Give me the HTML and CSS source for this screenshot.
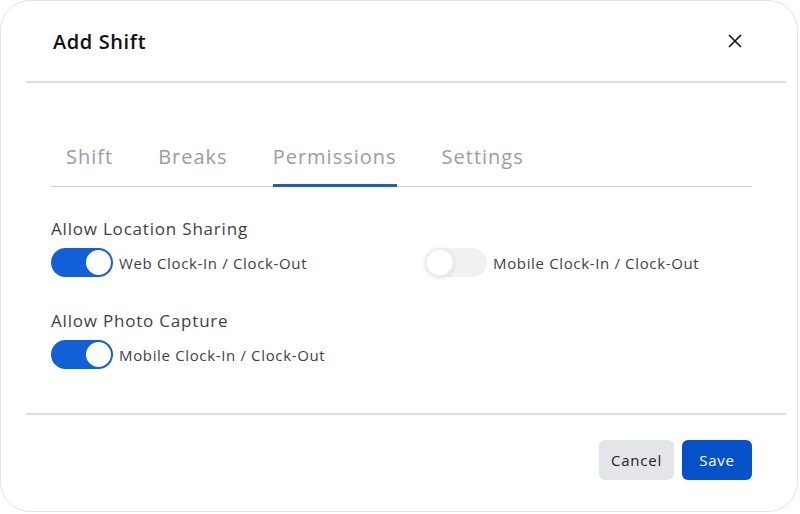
FILE: index.html
```html
<!DOCTYPE html>
<html lang="en">
<head>
<meta charset="utf-8">
<title>Add Shift</title>
<link rel="stylesheet" href="styles.css">
</head>
<body>
<div class="modal">
  <div class="header">
    <h1 class="title">Add Shift</h1>
    <button class="close" aria-label="Close">
      <svg width="14" height="14" viewBox="0 0 14 14"><path d="M1 1L13 13M13 1L1 13" stroke="#111" stroke-width="1.6" fill="none"/></svg>
    </button>
  </div>
  <div class="divider"></div>
  <div class="content">
    <div class="tabs">
      <div class="tab">Shift</div>
      <div class="tab">Breaks</div>
      <div class="tab active">Permissions</div>
      <div class="tab">Settings</div>
    </div>
    <div class="section first">
      <div class="section-title">Allow Location Sharing</div>
      <div class="row">
        <label class="option">
          <span class="toggle on"><span class="knob"></span></span>
          <span class="opt-label">Web Clock-In / Clock-Out</span>
        </label>
        <label class="option">
          <span class="toggle off"><span class="knob"></span></span>
          <span class="opt-label">Mobile Clock-In / Clock-Out</span>
        </label>
      </div>
    </div>
    <div class="section second">
      <div class="section-title">Allow Photo Capture</div>
      <div class="row">
        <label class="option">
          <span class="toggle on"><span class="knob"></span></span>
          <span class="opt-label">Mobile Clock-In / Clock-Out</span>
        </label>
      </div>
    </div>
  </div>
  <div class="divider footer-divider"></div>
  <div class="footer">
    <button class="btn cancel">Cancel</button>
    <button class="btn save">Save</button>
  </div>
</div>
</body>
</html>
```
FILE: styles.css
```css
* { box-sizing: border-box; }
html, body { margin: 0; padding: 0; background: #fff; }
body { font-family: "Open Sans", "Liberation Sans", sans-serif; color: #3f3f46; }

.modal {
  width: 798px;
  height: 512px;
  border: 1px solid #e2e2e2;
  border-radius: 30px;
  background: #fff;
}

.header {
  height: 80px;
  display: flex;
  align-items: center;
  justify-content: space-between;
  padding: 0 55px 0 52px;
}
.title {
  margin: 0;
  font-size: 20px;
  font-weight: 600;
  color: #111;
  letter-spacing: 0.6px;
}
.close {
  border: 0;
  background: none;
  padding: 0;
  width: 14px;
  height: 14px;
  display: flex;
  cursor: pointer;
}

.divider {
  height: 2px;
  background: #dedede;
  margin: 0 11px 0 25px;
}

.content {
  padding: 0 45px 0 50px;
}

.tabs {
  margin-top: 59px;
  display: flex;
  gap: 45px;
  padding-left: 15px;
  border-bottom: 1px solid #cfcfcf;
}
.tab {
  font-size: 20px;
  line-height: 30px;
  letter-spacing: 1px;
  padding-bottom: 12px;
  color: #9b9ca4;
  border-bottom: 3px solid transparent;
  margin-bottom: -1px;
}
.tab.active {
  border-bottom-color: #1a5fc8;
}

.section.first { margin-top: 30px; }
.section.second { margin-top: 32px; }
.section-title {
  font-size: 17px;
  line-height: 24px;
  letter-spacing: 0.8px;
  color: #3f3f46;
}
.row {
  margin-top: 7px;
  display: grid;
  grid-template-columns: 374px 1fr;
}
.option {
  display: flex;
  align-items: center;
  gap: 6px;
}
.opt-label {
  font-size: 15px;
  letter-spacing: 0.65px;
  color: #3f3f46;
}

.toggle {
  width: 62px;
  height: 29px;
  border-radius: 15px;
  display: flex;
  align-items: center;
  padding: 0 2px;
  flex: none;
}
.toggle.on {
  background: #1160d8;
  justify-content: flex-end;
}
.toggle.off {
  background: #f1f1f2;
  justify-content: flex-start;
  padding: 0;
}
.knob {
  width: 25px;
  height: 25px;
  border-radius: 50%;
  background: #fff;
}
.toggle.off .knob {
  width: 29px;
  height: 29px;
  border: 2px solid #efefef;
  box-shadow: 0 1px 4px rgba(0,0,0,0.12);
}

.footer-divider { margin-top: 44px; }

.footer {
  display: flex;
  justify-content: flex-end;
  gap: 8px;
  padding: 25px 45px 0 0;
}
.btn {
  height: 40px;
  border: 0;
  border-radius: 6px;
  font-family: inherit;
  font-size: 15px;
  letter-spacing: 0.8px;
  padding: 0;
  cursor: pointer;
}
.btn.cancel { background: #e4e5e8; color: #222; width: 75px; }
.btn.save { background: #0552c8; color: #fff; width: 70px; }
```
